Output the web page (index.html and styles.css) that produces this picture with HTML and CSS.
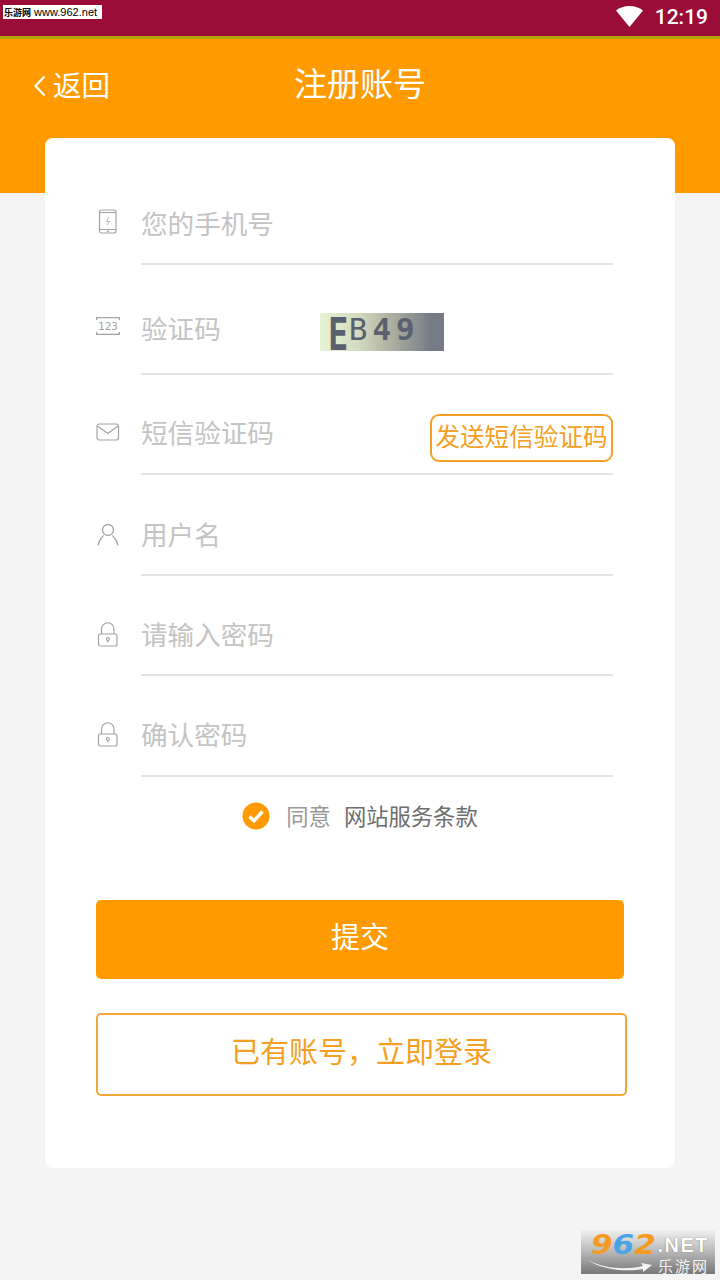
FILE: index.html
```html
<!DOCTYPE html>
<html lang="zh-CN">
  <head>
    <meta charset="UTF-8" />
    <meta name="viewport" content="width=device-width, initial-scale=1.0" />
    <title>注册账号</title>
    <link rel="stylesheet" href="styles.css">
  </head>
  <body>
    <div class="status-bar">
      <svg class="wifi" width="27" height="21" viewBox="0 0 27 21"><path d="M0 4.500C3.700 1.500 8.300 0 13.500 0S23.300 1.500 27 4.500L13.500 21z" fill="#fff"/></svg>
      <span class="clock">12:19</span>
    </div>

    <div class="watermark"><span class="watermark-cn">乐游网</span> www.962.net</div>

    <header class="top-bar">
      <a class="back">
        <svg class="chevron" width="14" height="24" viewBox="0 0 14 24"><path d="M11.500 2.500 2.500 12l9 9.500" fill="none" stroke="#fff" stroke-width="2.200"/></svg>
        <span>返回</span>
      </a>
      <h1>注册账号</h1>
    </header>

    <main class="card">
      <form>
        <div class="row row-phone">
          <svg class="icon" width="24" height="26" viewBox="0 0 24 26" fill="none" stroke="#a3a3a3" stroke-width="1.200">
            <rect x="3.500" y="1" width="16.500" height="23" rx="2"/>
            <path d="M3.500 20.500h16.500M3.500 3.500h16.500"/>
            <path d="M13 8l-2.500 4.500h3L11 16" stroke-width=".8"/>
            <path d="M11 22.300h2"/>
          </svg>
          <div class="field"><span class="hint">您的手机号</span></div>
        </div>

        <div class="row row-captcha">
          <svg class="icon" width="24" height="20" viewBox="0 0 24 20" fill="none" stroke="#a3a3a3" stroke-width="1.300">
            <path d="M.7 4V1.700h22.600V4M.7 16v2.300h22.600V16"/>
            <text x="12" y="14" text-anchor="middle" class="icon-num">123</text>
          </svg>
          <div class="field">
            <span class="hint">验证码</span>
            <div class="captcha"><span class="big">E</span><span class="small">B<b>49</b></span></div>
          </div>
        </div>

        <div class="row row-sms">
          <svg class="icon" width="24" height="18" viewBox="0 0 24 18" fill="none" stroke="#a3a3a3" stroke-width="1.200">
            <rect x="1" y="1" width="21.500" height="16" rx="2.500"/>
            <path d="M1.500 3l10.300 7.500L22 3"/>
          </svg>
          <div class="field">
            <span class="hint">短信验证码</span>
            <button type="button" class="send-code">发送短信验证码</button>
          </div>
        </div>

        <div class="row row-user">
          <svg class="icon" width="24" height="24" viewBox="0 0 24 24" fill="none" stroke="#a3a3a3" stroke-width="1.300">
            <circle cx="12" cy="7" r="5.500"/>
            <path d="M2 22.500c.8-5 4.500-9.500 6-10M22 22.500c-.8-5-4.500-9.500-6-10"/>
          </svg>
          <div class="field"><span class="hint">用户名</span></div>
        </div>

        <div class="row row-lock">
          <svg class="icon" width="24" height="26" viewBox="0 0 24 26" fill="none" stroke="#a3a3a3" stroke-width="1.200">
            <rect x="2.500" y="13" width="18.500" height="12" rx="2"/>
            <path d="M5.500 13V8a6.200 6.200 0 0 1 12.500 0V13"/>
            <circle cx="11.800" cy="18" r="1.500"/>
            <path d="M11.800 19.500v2"/>
          </svg>
          <div class="field"><span class="hint">请输入密码</span></div>
        </div>

        <div class="row row-lock">
          <svg class="icon" width="24" height="26" viewBox="0 0 24 26" fill="none" stroke="#a3a3a3" stroke-width="1.200">
            <rect x="2.500" y="13" width="18.500" height="12" rx="2"/>
            <path d="M5.500 13V8a6.200 6.200 0 0 1 12.500 0V13"/>
            <circle cx="11.800" cy="18" r="1.500"/>
            <path d="M11.800 19.500v2"/>
          </svg>
          <div class="field"><span class="hint">确认密码</span></div>
        </div>

        <div class="agree">
          <svg width="28" height="28" viewBox="0 0 28 28">
            <circle cx="14" cy="14" r="13.500" fill="#ff9b00"/>
            <path d="M7.500 14.500l4.500 4.300L20.500 9.500" fill="none" stroke="#fff" stroke-width="3.400"/>
          </svg>
          <span class="agree-label">同意</span>
          <span class="agree-terms">网站服务条款</span>
        </div>

        <button type="button" class="btn btn-submit">提交</button>
        <button type="button" class="btn btn-login">已有账号，立即登录</button>
      </form>
    </main>

    <div class="logo-962">
      <div class="logo-top">
        <div class="digits"><span class="d9">9</span><span class="d6">6</span><span class="d2">2</span></div>
        <span class="net">.NET</span>
      </div>
      <div class="logo-bottom">
        <svg width="68" height="14" viewBox="0 0 68 14"><path d="M1 1c17 9 38 10 55 6l-2-3 11 2-9 7 0-3C40 13 15 11 1 1z" fill="#f4f4f4"/></svg>
        <span>乐游网</span>
      </div>
    </div>
  </body>
</html>
```

FILE: styles.css
```css
* {
  box-sizing: border-box;
}
html, body {
  height: 100%;
}
body {
  margin: 0;
  padding: 0;
  background-color: #f4f4f4;
  font-family: "Noto Sans CJK SC", "Noto Sans", sans-serif;
  font-weight: 400;
  overflow: hidden;
}
.status-bar {
  display: flex;
  align-items: center;
  justify-content: flex-end;
  gap: 12px;
  height: 39px;
  padding: 0 12px 3px 0;
  background-color: #990d38;
  border-bottom: 3px solid #b5a20c;
}
.clock {
  color: #fff;
  font-family: Roboto, sans-serif;
  font-size: 21px;
  font-weight: 500;
}
.watermark {
  position: absolute;
  left: 3px;
  top: 5px;
  width: 99px;
  height: 14px;
  padding-left: 1px;
  background-color: #fff;
  color: #000;
  font-family: "Liberation Sans", "Noto Sans CJK SC", sans-serif;
  font-size: 11px;
  line-height: 14px;
  white-space: nowrap;
}
.watermark-cn {
  font-family: "Noto Sans CJK SC", sans-serif;
  font-size: 9px;
  font-weight: 700;
}
.top-bar {
  position: relative;
  display: flex;
  justify-content: center;
  height: 154px;
  padding-top: 17px;
  background-color: #ff9b00;
  color: #fff;
}
.top-bar h1 {
  margin: 0;
  font-size: 33px;
  font-weight: 400;
  line-height: 52px;
}
.back {
  position: absolute;
  left: 33px;
  top: 20px;
  display: flex;
  align-items: center;
  gap: 6px;
  font-size: 28.500px;
  line-height: 50px;
}
.chevron {
  margin-top: 4px;
}
.card {
  position: relative;
  width: 630px;
  height: 1030px;
  margin: -55px auto 0;
  padding: 27px 51px 0;
  background-color: #fff;
  border-radius: 8px;
}
.row {
  display: flex;
  height: 100.400px;
}
.row-phone {
  height: 100px;
}
.row-captcha {
  height: 110px;
}
.icon {
  flex: none;
  margin-right: 21px;
}
.row-phone .icon {
  margin-top: 44px;
}
.row-captcha .icon {
  margin-top: 51px;
}
.row-sms .icon, .row-user .icon {
  margin-top: 48px;
}
.row-lock .icon {
  margin-top: 45px;
}
.field {
  flex: 1;
  display: flex;
  align-items: center;
  justify-content: space-between;
  margin-right: 11px;
  padding-top: 18px;
  border-bottom: 2px solid #e4e4e4;
}
.row-captcha .field {
  justify-content: flex-start;
}
.row-sms .field {
  padding-top: 16px;
}
.hint {
  color: #c4c4c4;
  font-size: 26.600px;
  line-height: 40px;
  white-space: nowrap;
}
.icon-num {
  fill: #a3a3a3;
  stroke: none;
  font-family: "DejaVu Sans Mono", monospace;
  font-size: 11px;
}
.captcha {
  display: flex;
  align-items: flex-start;
  gap: 4px;
  width: 124px;
  height: 38px;
  margin: 8px 0 0 99px;
  padding-left: 8px;
  background: linear-gradient(90deg, #e8f3d4 0%, #d5dcc0 30%, #a8ab9e 60%, #757b86 90%, #767b86 100%);
  color: #5b6070;
  font-family: "DejaVu Sans Mono", monospace;
}
.captcha .big {
  width: 17px;
  margin-top: 3px;
  font-size: 45px;
  font-weight: 700;
  line-height: 38px;
  transform: scaleX(.75);
  transform-origin: left;
}
.captcha .small {
  margin-top: -1px;
  font-size: 31px;
  line-height: 34px;
  letter-spacing: 5px;
}
.send-code {
  width: 183px;
  height: 48px;
  margin-top: 12px;
  padding: 0 0 6px;
  background: #fff;
  border: 2px solid #f5a025;
  border-radius: 9px;
  color: #f5a025;
  font-family: inherit;
  font-size: 24.600px;
  font-weight: 400;
  white-space: nowrap;
}
.agree {
  display: flex;
  align-items: center;
  justify-content: center;
  height: 78px;
  color: #6e6e6e;
  font-size: 22.300px;
  line-height: 28px;
}
.agree-label {
  margin-left: 16px;
  margin-bottom: 2px;
  color: #999;
}
.agree-terms {
  margin-left: 13px;
  margin-bottom: 2px;
}
.btn {
  display: block;
  padding: 0 0 8px;
  font-family: inherit;
  font-size: 29px;
  font-weight: 400;
}
.btn-submit {
  width: 528px;
  height: 79px;
  margin-top: 45px;
  background-color: #ff9b00;
  border: 0;
  border-radius: 5px;
  color: #fff;
}
.btn-login {
  width: 531px;
  height: 83px;
  margin-top: 34px;
  background-color: #fff;
  border: 2px solid #f5a73a;
  border-radius: 5px;
  color: #f5a025;
}
.logo-962 {
  position: absolute;
  left: 581px;
  top: 1230px;
  width: 134px;
  height: 44px;
  padding: 3px 6px 0;
  background: linear-gradient(180deg, #f0f0f0 0%, #bdbdbd 45%, #777 100%);
}
.logo-top {
  display: flex;
  align-items: baseline;
  height: 24px;
  line-height: 24px;
  white-space: nowrap;
}
.digits {
  width: 65px;
  margin-left: 4px;
  font-family: "DejaVu Sans", sans-serif;
  font-style: italic;
  font-weight: 700;
  font-size: 27px;
  transform: scaleX(1.15);
  transform-origin: left;
}
.d9, .d2 {
  color: #f59a23;
}
.d6 {
  color: #4ba3e3;
}
.net {
  margin-left: 4px;
  color: #fff;
  font-family: "Liberation Sans", sans-serif;
  font-size: 20px;
  font-weight: 700;
  letter-spacing: 1.500px;
  text-shadow: 0 0 1px #555;
  transform: translateY(-2px);
}
.logo-bottom {
  display: flex;
  align-items: center;
  justify-content: space-between;
  height: 17px;
  color: #f4f4f4;
  font-size: 15px;
  line-height: 17px;
  letter-spacing: 2px;
}
```
